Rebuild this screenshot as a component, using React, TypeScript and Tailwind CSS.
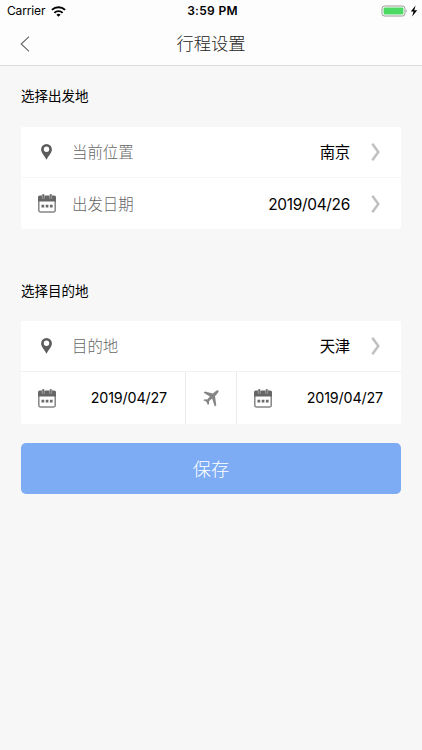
import type { ReactNode } from 'react'

function WifiIcon() {
  return (
    <svg width="15" height="11" viewBox="0 0 15 11" fill="none" stroke="#000" strokeWidth="1.9">
      <path d="M0.9 3.9a9.4 9.4 0 0 1 13.2 0" />
      <path d="M3.4 6.8a5.8 5.8 0 0 1 8.2 0" />
      <path d="M7.5 10.8 5.4 8.7a3 3 0 0 1 4.2 0z" fill="#000" stroke="none" />
    </svg>
  )
}

function PinIcon() {
  return (
    <svg width="11" height="16" viewBox="0 0 11 16" fill="#5c5c5c">
      <path
        fillRule="evenodd"
        d="M5.5 0A5.4 5.4 0 0 0 .1 5.4c0 3.4 3.6 6.2 5.4 10.4 1.8-4.2 5.4-7 5.4-10.4A5.4 5.4 0 0 0 5.5 0zm0 2.5a2.7 2.7 0 1 1 0 5.4 2.7 2.7 0 0 1 0-5.4z"
      />
    </svg>
  )
}

function CalendarIcon() {
  return (
    <svg width="18" height="19" viewBox="0 0 18 19">
      <rect x="0.8" y="3" width="16.4" height="15" rx="1.4" fill="#fff" stroke="#858585" strokeWidth="1.5" />
      <path d="M0 7.6V3.2Q0 1.5 1.7 1.5h14.6Q18 1.5 18 3.2v4.4z" fill="#666" />
      <path d="M5.2 0v4.6M12.8 0v4.6" stroke="#c4c4c4" strokeWidth="2.6" />
      <path d="M5.2 .2v4.2M12.8 .2v4.2" stroke="#6c6c6c" strokeWidth="1.5" />
      <path d="M3.5 10.8h2.7v2.7H3.5zM7.7 10.8h2.7v2.7H7.7zM11.9 10.8h2.7v2.7h-2.7z" fill="#6a6a6a" />
    </svg>
  )
}

function PlaneIcon() {
  return (
    <svg width="16" height="17" viewBox="0 0 16 17" fill="#858585">
      <path d="M15.4.5c-.8-.5-1.9 0-2.8.8L9.9 3.5 2 1.4.6 2.8l6.3 3.6-2.7 3.2-2.6-.4-1.2 1 3 1.6 1.5 3.2 1.2-1-.1-2.7 3.1-2.7 2.7 8 1.5-1.3-1.3-9 2.4-2.7C15.2 2.7 16 1.3 15.4.5z" />
    </svg>
  )
}

function Chevron() {
  return (
    <svg width="9" height="18" viewBox="0 0 9 18" fill="none" stroke="#c0c0c0" strokeWidth="2.5">
      <path d="M1.3 .7 7.3 9 1.3 17.3" />
    </svg>
  )
}

function StatusBar() {
  return (
    <div className="grid h-[22px] grid-cols-3 items-center pl-[7px] pr-1 text-black">
      <div className="flex items-center gap-[6px] text-[12px] tracking-[-0.15px]">
        <span>Carrier</span>
        <WifiIcon />
      </div>
      <div className="text-center text-[12px] font-semibold tracking-[0.3px]">3:59 PM</div>
      <div className="flex justify-end">
        <svg width="37" height="12" viewBox="0 0 37 12">
          <rect x="1" y="1" width="23" height="10" rx="2.5" fill="#fff" stroke="#999" />
          <rect x="2.6" y="2.6" width="19.8" height="6.8" rx="1" fill="#4cd964" />
          <path d="M25.3 4.2q1.5 1.8 0 3.6z" fill="#999" />
          <path d="M34.6 .6 29.8 6.6h2.7l-1.3 4.8 5-6.2h-2.9z" fill="#000" />
        </svg>
      </div>
    </div>
  )
}

type RowProps = {
  icon: ReactNode
  label: string
  value: string
}

function Row({ icon, label, value }: RowProps) {
  return (
    <div className="flex h-[51px] items-center pl-4 pr-[21px] text-[15.4px]">
      <span className="flex w-[19px] justify-center">{icon}</span>
      <span className="ml-4 pt-0.5 font-light text-[#666]">{label}</span>
      <span className="ml-auto mr-[21px] pt-0.5 tracking-[-0.27px] text-black">{value}</span>
      <Chevron />
    </div>
  )
}

function DateCell({ date }: { date: string }) {
  return (
    <div className="flex flex-1 items-center justify-between pl-[16.5px] pr-[18px]">
      <CalendarIcon />
      <span className="text-[14.3px] tracking-[-0.15px] text-black">{date}</span>
    </div>
  )
}

export default function App() {
  return (
    <div className="h-[750px] w-[422px] overflow-hidden bg-[#f7f7f7] font-['Inter','Noto_Sans_CJK_SC',sans-serif]">
      <header className="h-[66px] border-b border-[#dcdcdc] bg-[#fdfdfd]">
        <StatusBar />
        <div className="grid h-[43px] grid-cols-3 items-center px-5">
          <svg width="10" height="16" viewBox="0 0 10 16" fill="none" stroke="#666" strokeWidth="1.1">
            <path d="M9 .6 1.2 8 9 15.4" />
          </svg>
          <h1 className="text-center text-[17.3px] font-light text-[#222]">行程设置</h1>
        </div>
      </header>

      <main className="px-[21px]">
        <h2 className="pt-5 text-[13.5px] leading-5 text-black">选择出发地</h2>
        <section className="mt-[21px] divide-y divide-[#f6f6f6] rounded-[2px] bg-white">
          <Row icon={<PinIcon />} label="当前位置" value="南京" />
          <Row icon={<CalendarIcon />} label="出发日期" value="2019/04/26" />
        </section>

        <h2 className="mt-[52px] text-[13.5px] leading-5 text-black">选择目的地</h2>
        <section className="mt-5 divide-y divide-[#f2f2f2] rounded-[2px] bg-white">
          <Row icon={<PinIcon />} label="目的地" value="天津" />
          <div className="flex h-[52px] divide-x divide-[#ececec]">
            <DateCell date="2019/04/27" />
            <div className="flex w-[51px] items-center justify-center">
              <PlaneIcon />
            </div>
            <DateCell date="2019/04/27" />
          </div>
        </section>

        <button className="mt-[19px] h-[51px] w-full rounded-[5px] bg-[#7dacf5] pt-0.5 text-[18.3px] font-light text-white">
          保存
        </button>
      </main>
    </div>
  )
}
